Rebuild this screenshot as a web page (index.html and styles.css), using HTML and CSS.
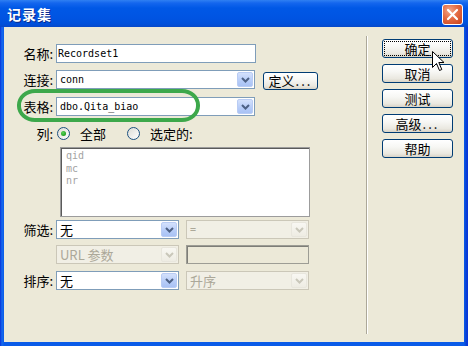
FILE: index.html
```html
<!DOCTYPE html>
<html lang="zh-CN">
<head>
    <meta charset="UTF-8">
    <title>记录集</title>
    <link rel="stylesheet" href="styles.css">
</head>
<body>
    <div class="window">
        <div class="titlebar">
            <span class="title">记录集</span>
            <span class="close">
                <svg width="13" height="13" viewBox="0 0 13 13"><path d="M2 2 L11 11 M11 2 L2 11" stroke="#fff" stroke-width="2.2" stroke-linecap="round"/></svg>
            </span>
        </div>
        <div class="client">
            <div class="form">
                <div class="row">
                    <span class="lbl">名称:</span>
                    <div class="field w-name">Recordset1</div>
                </div>
                <div class="row r-conn">
                    <span class="lbl">连接:</span>
                    <div class="select w-wide"><span class="val">conn</span><span class="arrow"><svg width="9" height="6" viewBox="0 0 9 6"><path d="M1 1 L4.5 4.5 L8 1" fill="none" stroke="#4D6185" stroke-width="2"/></svg></span></div>
                    <button class="btn btn-def">定义<span class="dots">...</span></button>
                </div>
                <div class="row r-table">
                    <span class="lbl">表格:</span>
                    <div class="select w-wide"><span class="val">dbo.Qita_biao</span><span class="arrow"><svg width="9" height="6" viewBox="0 0 9 6"><path d="M1 1 L4.5 4.5 L8 1" fill="none" stroke="#4D6185" stroke-width="2"/></svg></span></div>
                </div>
                <div class="row r-radio">
                    <span class="lbl">列:</span>
                    <span class="radio checked"></span>
                    <span class="rtext">全部</span>
                    <span class="radio second"></span>
                    <span class="rtext">选定的:</span>
                </div>
                <div class="listbox">
                    <div>qid</div>
                    <div>mc</div>
                    <div>nr</div>
                </div>
                <div class="row r-filter">
                    <span class="lbl">筛选:</span>
                    <div class="select w-half"><span class="val cjk">无</span><span class="arrow"><svg width="9" height="6" viewBox="0 0 9 6"><path d="M1 1 L4.5 4.5 L8 1" fill="none" stroke="#4D6185" stroke-width="2"/></svg></span></div>
                    <div class="select w-half dis gap"><span class="val">=</span><span class="arrow"><svg width="9" height="6" viewBox="0 0 9 6"><path d="M1 1 L4.5 4.5 L8 1" fill="none" stroke="#C9C7BA" stroke-width="2"/></svg></span></div>
                </div>
                <div class="row r-url">
                    <span class="lbl"></span>
                    <div class="select w-half dis"><span class="val cjk">URL 参数</span><span class="arrow"><svg width="9" height="6" viewBox="0 0 9 6"><path d="M1 1 L4.5 4.5 L8 1" fill="none" stroke="#C9C7BA" stroke-width="2"/></svg></span></div>
                    <div class="field w-half dis-field gap"></div>
                </div>
                <div class="row r-sort">
                    <span class="lbl">排序:</span>
                    <div class="select w-half"><span class="val cjk">无</span><span class="arrow"><svg width="9" height="6" viewBox="0 0 9 6"><path d="M1 1 L4.5 4.5 L8 1" fill="none" stroke="#4D6185" stroke-width="2"/></svg></span></div>
                    <div class="select w-half dis gap"><span class="val cjk">升序</span><span class="arrow"><svg width="9" height="6" viewBox="0 0 9 6"><path d="M1 1 L4.5 4.5 L8 1" fill="none" stroke="#C9C7BA" stroke-width="2"/></svg></span></div>
                </div>
            </div>
            <div class="sep"></div>
            <div class="side">
                <button class="btn side-btn focus"><span class="ring">确定</span></button>
                <button class="btn side-btn">取消</button>
                <button class="btn side-btn">测试</button>
                <button class="btn side-btn">高级<span class="dots">...</span></button>
                <button class="btn side-btn">帮助</button>
            </div>
        </div>
        <div class="mark"></div>
        <svg class="cursor" width="13" height="21" viewBox="0 0 13 21">
            <path d="M0.5 0.5 L0.5 16.5 L4.5 12.5 L7.5 19.5 L9.8 18.5 L6.8 11.5 L12 11.5 Z" fill="#fff" stroke="#000" stroke-width="1"/>
        </svg>
    </div>
</body>
</html>
```

FILE: styles.css
```css
* {
    box-sizing: border-box;
}
body {
    margin: 0;
    font-family: "Noto Sans CJK SC", "Liberation Sans", sans-serif;
    font-size: 13px;
    color: #000;
}
.window {
    position: relative;
    width: 468px;
    height: 346px;
    display: flex;
    flex-direction: column;
    background: linear-gradient(90deg, #0831D9 0, #166AEE 2px, #0A5BE8 4px, #0A5BE8 464px, #0842D6 466px, #0831D9 468px);
    overflow: hidden;
}
.titlebar {
    height: 27px;
    display: flex;
    align-items: center;
    justify-content: space-between;
    padding: 0 5px 0 7px;
    background: linear-gradient(#2F80F2 0, #1466EE 3px, #0058E6 8px, #0054E2 18px, #0050DB 24px, #0748C8 27px);
}
.title {
    color: #fff;
    font-weight: bold;
    font-size: 14px;
    letter-spacing: 1px;
    text-shadow: 1px 1px 0 #0A2A8C;
}
.close {
    width: 21px;
    height: 21px;
    margin-top: 1px;
    border: 1px solid #fff;
    border-radius: 3px;
    background: radial-gradient(circle at 35% 30%, #F2A68A 0, #E46B43 45%, #C8411A 100%);
    display: flex;
    align-items: center;
    justify-content: center;
}
.client {
    flex: 1;
    margin: 0 4px 4px;
    background: #ECE9D8;
    display: flex;
}
.form {
    width: 362px;
    padding-top: 17px;
    display: flex;
    flex-direction: column;
}
.row {
    display: flex;
    align-items: center;
    height: 19px;
}
.r-conn { margin-top: 7px; }
.r-table { margin-top: 8px; }
.r-radio { margin-top: 7px; height: 20px; }
.r-filter { margin-top: 3px; }
.r-url { margin-top: 6px; }
.r-sort { margin-top: 7px; }
.lbl {
    width: 52px;
    flex: none;
    text-align: right;
    padding-right: 3px;
    font-size: 13px;
}
.field {
    height: 19px;
    border: 1px solid #7F9DB9;
    background: #fff;
    font-family: "DejaVu Sans Mono", "Liberation Mono", monospace;
    font-size: 10px;
    padding-left: 1px;
    display: flex;
    align-items: center;
}
.w-name { width: 200px; }
.w-wide { width: 199px; }
.w-half { width: 123px; }
.gap { margin-left: 7px; }
.select {
    height: 19px;
    display: flex;
    align-items: center;
    border: 1px solid #7F9DB9;
    background: #fff;
    padding: 1px;
}
.select .val {
    flex: 1;
    padding-left: 2px;
    font-family: "DejaVu Sans Mono", "Liberation Mono", monospace;
    font-size: 10px;
    white-space: nowrap;
}
.select .val.cjk {
    font-family: "Noto Sans CJK SC", sans-serif;
    font-size: 13px;
    line-height: 1;
}
.arrow {
    width: 16px;
    height: 15px;
    flex: none;
    display: flex;
    align-items: center;
    justify-content: center;
    border: 1px solid #B9CCF4;
    border-radius: 2px;
    background: linear-gradient(#D4E1FC, #B6CCF8 60%, #A9C2F4);
}
.select.dis {
    background: #F1EFE5;
    border-color: #CBC7B8;
    color: #ACA899;
}
.select.dis .arrow {
    border-color: #E8E6DD;
    background: linear-gradient(#F8F7F2, #EEECE3);
}
.dis-field {
    background: #ECE9D8;
    border: 1px solid #9D9D95;
    box-shadow: inset 1px 1px 0 #7E7E78;
}
.btn {
    height: 19px;
    padding: 0;
    border: 1px solid #003C74;
    border-radius: 3px;
    background: linear-gradient(#FFFFFF 0, #F7F7F4 40%, #EAE8E0 80%, #D8D3C7 100%);
    font-family: "Noto Sans CJK SC", sans-serif;
    font-size: 13px;
    line-height: 1;
    color: #000;
    display: flex;
    align-items: center;
    justify-content: center;
}
.dots {
    letter-spacing: 2px;
    margin-left: 1px;
}
.btn-def {
    width: 55px;
    height: 18px;
    margin-left: 8px;
    margin-top: 2px;
}
.r-radio .radio {
    width: 13px;
    height: 13px;
    flex: none;
    border: 1px solid #1C5180;
    border-radius: 50%;
    background: linear-gradient(135deg, #DCDCD5, #FFFFFF);
    margin-left: 1px;
    position: relative;
}
.radio.checked::after {
    content: "";
    position: absolute;
    left: 3px;
    top: 3px;
    width: 5px;
    height: 5px;
    border-radius: 50%;
    background: radial-gradient(circle at 40% 35%, #5BD45B, #21A121 70%, #1A8A1A);
}
.radio.second {
    margin-left: 21px;
}
.rtext {
    margin-left: 10px;
    font-size: 13px;
}
.listbox {
    margin: 4px 0 0 56px;
    width: 250px;
    height: 70px;
    background: #fff;
    border: 1px solid #9C9C9C;
    box-shadow: inset 1px 1px 0 #5A5A5A;
    padding: 2px 0 0 5px;
    font-family: "DejaVu Sans Mono", "Liberation Mono", monospace;
    font-size: 10px;
    line-height: 12.5px;
    color: #A3A3A3;
}
.sep {
    width: 2px;
    margin: 9px 0 8px;
    border-left: 1px solid #ACA899;
    border-right: 1px solid #FFFFFF;
}
.side {
    padding: 12px 0 0 14px;
    display: flex;
    flex-direction: column;
    gap: 6px;
}
.side-btn {
    width: 71px;
}
.focus .ring {
    display: flex;
    align-items: center;
    justify-content: center;
    width: 65px;
    height: 13px;
    outline: 1px dotted #000;
}
.mark {
    position: absolute;
    left: 17px;
    top: 89px;
    width: 183px;
    height: 33px;
    border: 4px solid #3DA84B;
    border-radius: 18px / 16px;
}
.cursor {
    position: absolute;
    left: 432px;
    top: 51px;
}
```
